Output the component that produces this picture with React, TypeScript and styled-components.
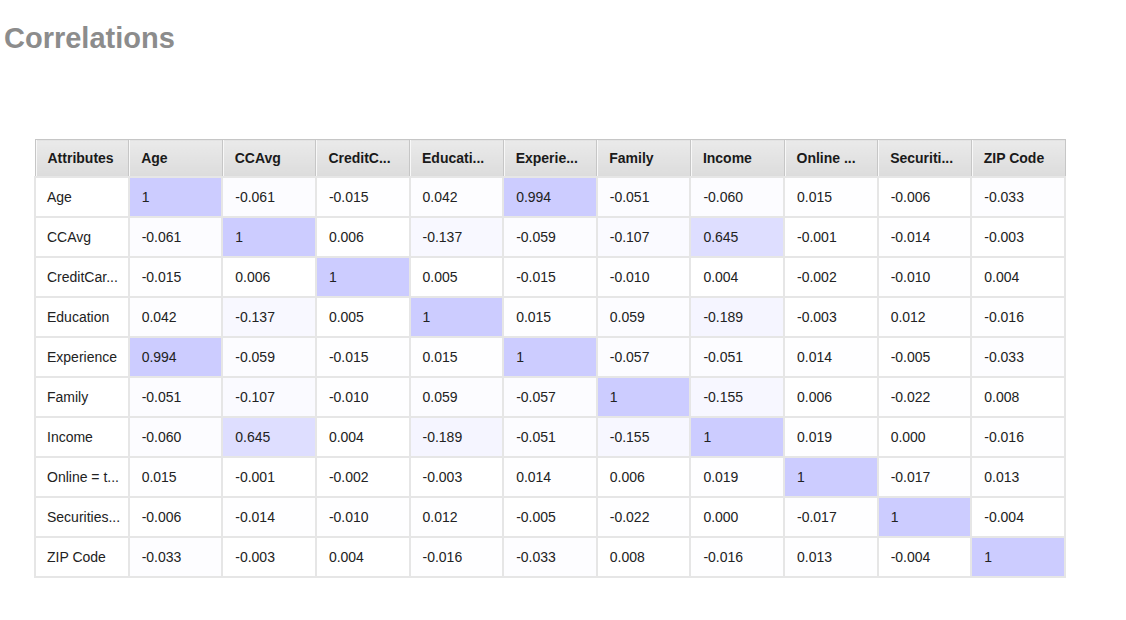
import React from 'react';
import styled, { createGlobalStyle } from 'styled-components';

const GlobalStyle = createGlobalStyle`
    html, body {
        margin: 0;
        padding: 0;
        background: #FFF;
        font-family: "Liberation Sans", Arial, sans-serif;
    }
`;

const Page = styled.div`
    padding: 0 0 40px;
`;

const Title = styled.h1`
    margin: 0;
    padding: 19px 0 0 4px;
    font-size: 29px;
    line-height: 38px;
    font-weight: bold;
    color: #8C8C8C;
`;

const TableWrap = styled.div`
    padding: 82px 0 0 34px;
`;

const Table = styled.table`
    width: 1032px;
    table-layout: fixed;
    border-collapse: collapse;
    font-size: 14px;
    color: #222;
`;

const HeadCell = styled.th`
    height: 36px;
    padding: 0 0 0 12px;
    text-align: left;
    font-weight: bold;
    color: #1A1A1A;
    white-space: nowrap;
    overflow: hidden;
    background: linear-gradient(#EAEAEA, #DCDCDC);
    border: 1px solid #C6C6C6;
    box-shadow: inset 1px 0 0 #F8F8F8;
`;

const Cell = styled.td<{ $strength: number }>`
    height: 38px;
    padding: 0 0 0 12px;
    white-space: nowrap;
    overflow: hidden;
    border: 2px solid #E6E6E6;
    background-color: ${({ $strength }) => {
        const c = Math.round(255 - 51 * $strength);
        return `rgb(${c}, ${c}, 255)`;
    }};
`;

const LabelCell = styled.td`
    height: 38px;
    padding: 0 0 0 11px;
    white-space: nowrap;
    overflow: hidden;
    border: 2px solid #E6E6E6;
    background-color: #FFF;
`;

const columns = ['Age', 'CCAvg', 'CreditC...', 'Educati...', 'Experie...', 'Family', 'Income', 'Online ...', 'Securiti...', 'ZIP Code'];

const rows: Array<{ label: string, values: number[] }> = [
    { label: 'Age', values: [1, -0.061, -0.015, 0.042, 0.994, -0.051, -0.060, 0.015, -0.006, -0.033] },
    { label: 'CCAvg', values: [-0.061, 1, 0.006, -0.137, -0.059, -0.107, 0.645, -0.001, -0.014, -0.003] },
    { label: 'CreditCar...', values: [-0.015, 0.006, 1, 0.005, -0.015, -0.010, 0.004, -0.002, -0.010, 0.004] },
    { label: 'Education', values: [0.042, -0.137, 0.005, 1, 0.015, 0.059, -0.189, -0.003, 0.012, -0.016] },
    { label: 'Experience', values: [0.994, -0.059, -0.015, 0.015, 1, -0.057, -0.051, 0.014, -0.005, -0.033] },
    { label: 'Family', values: [-0.051, -0.107, -0.010, 0.059, -0.057, 1, -0.155, 0.006, -0.022, 0.008] },
    { label: 'Income', values: [-0.060, 0.645, 0.004, -0.189, -0.051, -0.155, 1, 0.019, 0.000, -0.016] },
    { label: 'Online = t...', values: [0.015, -0.001, -0.002, -0.003, 0.014, 0.006, 0.019, 1, -0.017, 0.013] },
    { label: 'Securities...', values: [-0.006, -0.014, -0.010, 0.012, -0.005, -0.022, 0.000, -0.017, 1, -0.004] },
    { label: 'ZIP Code', values: [-0.033, -0.003, 0.004, -0.016, -0.033, 0.008, -0.016, 0.013, -0.004, 1] },
];

const format = (v: number) => (v === 1 ? '1' : v.toFixed(3));

const App = () => (
    <Page>
        <GlobalStyle />
        <Title>Correlations</Title>
        <TableWrap>
            <Table>
                <thead>
                    <tr>
                        <HeadCell>Attributes</HeadCell>
                        {columns.map(col => (
                            <HeadCell key={col}>{col}</HeadCell>
                        ))}
                    </tr>
                </thead>
                <tbody>
                    {rows.map(row => (
                        <tr key={row.label}>
                            <LabelCell>{row.label}</LabelCell>
                            {row.values.map((v, i) => (
                                <Cell key={i} $strength={Math.abs(v)}>{format(v)}</Cell>
                            ))}
                        </tr>
                    ))}
                </tbody>
            </Table>
        </TableWrap>
    </Page>
);

export default App;
